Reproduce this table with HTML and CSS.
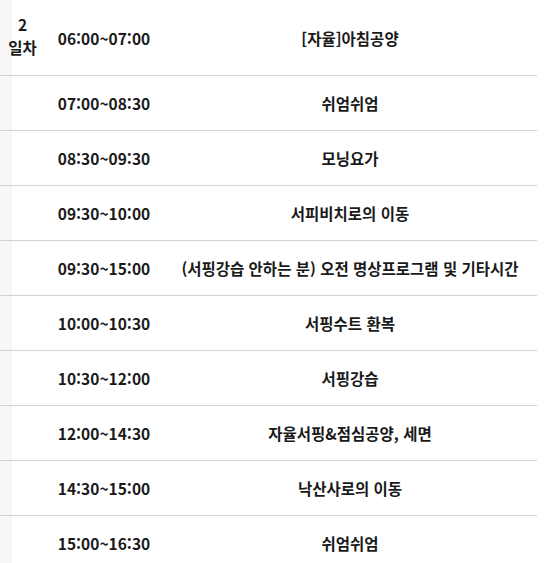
FILE: index.html
```html
<!DOCTYPE html>
<html lang="ko">
<head>
<meta charset="utf-8">
<link rel="stylesheet" href="styles.css">
</head>
<body>
<div class="page">
  <div class="schedule">
    <div class="row first">
      <div class="day">2<br>일차</div>
      <div class="time">06:00~07:00</div>
      <div class="act">[자율]아침공양</div>
    </div>
    <div class="row">
      <div class="day"></div>
      <div class="time">07:00~08:30</div>
      <div class="act">쉬엄쉬엄</div>
    </div>
    <div class="row">
      <div class="day"></div>
      <div class="time">08:30~09:30</div>
      <div class="act">모닝요가</div>
    </div>
    <div class="row">
      <div class="day"></div>
      <div class="time">09:30~10:00</div>
      <div class="act">서피비치로의 이동</div>
    </div>
    <div class="row">
      <div class="day"></div>
      <div class="time">09:30~15:00</div>
      <div class="act">(서핑강습 안하는 분) 오전 명상프로그램 및 기타시간</div>
    </div>
    <div class="row">
      <div class="day"></div>
      <div class="time">10:00~10:30</div>
      <div class="act">서핑수트 환복</div>
    </div>
    <div class="row">
      <div class="day"></div>
      <div class="time">10:30~12:00</div>
      <div class="act">서핑강습</div>
    </div>
    <div class="row">
      <div class="day"></div>
      <div class="time">12:00~14:30</div>
      <div class="act">자율서핑&amp;점심공양, 세면</div>
    </div>
    <div class="row">
      <div class="day"></div>
      <div class="time">14:30~15:00</div>
      <div class="act">낙산사로의 이동</div>
    </div>
    <div class="row">
      <div class="day"></div>
      <div class="time">15:00~16:30</div>
      <div class="act">쉬엄쉬엄</div>
    </div>
  </div>
</div>
</body>
</html>
```
FILE: styles.css
```css
html, body {
  margin: 0;
  padding: 0;
  background: #fff;
}
.page {
  background: linear-gradient(to right, #f7f7f7 0, #f7f7f7 12px, #fff 12px);
  min-height: 563px;
  overflow: hidden;
}
.schedule {
  width: 537px;
  font-family: "Noto Sans CJK KR", "Noto Sans", sans-serif;
  font-weight: 700;
  font-size: 15.5px;
  color: #1a1a1a;
}
.row {
  display: grid;
  grid-template-columns: 45px 118px 1fr;
  align-items: center;
  height: 54px;
  border-bottom: 1px solid #d2d2d2;
}
.row.first {
  height: 75px;
}
.day {
  text-align: center;
  line-height: 23px;
  margin-top: -3px;
}
.time {
  text-align: center;
}
.act {
  text-align: center;
  white-space: nowrap;
}
```
